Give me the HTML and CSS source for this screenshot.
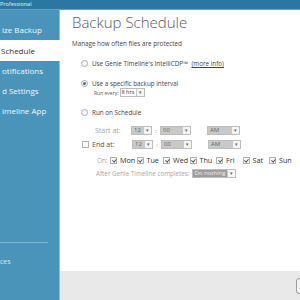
FILE: index.html
```html
<!DOCTYPE html>
<html>
<head>
<meta charset="utf-8">
<link rel="stylesheet" href="styles.css">
</head>
<body>
<div class="titlebar"><span class="apptitle">Professional</span></div>
<div class="main">
  <nav class="sidebar">
    <div class="item">ize Backup</div>
    <div class="item selected">Schedule</div>
    <div class="item">otifications</div>
    <div class="item">d Settings</div>
    <div class="item">imeline App</div>
    <div class="spacer"></div>
    <div class="sidebottom">
      <div class="sep"></div>
      <div class="item small">ces</div>
    </div>
  </nav>
  <section class="content">
    <div class="panel">
      <h1 class="heading">Backup Schedule</h1>
      <div class="desc">Manage how often files are protected</div>
      <div class="row r1"><span class="radio"></span><span>Use Genie Timeline's IntelliCDP™ <a class="link">(more info)</a></span></div>
      <div class="row r2"><span class="radio on"></span><span>Use a specific backup interval</span></div>
      <div class="row runevery"><span class="lbl dark">Run every:</span><span class="select white w-every"><span class="val">8 hrs</span><span class="arrow">▾</span></span></div>
      <div class="row r3"><span class="radio"></span><span>Run on Schedule</span></div>
      <div class="row time start"><span class="lbl gray w-lbl">Start at:</span>
        <span class="select grey w-h"><span class="val">12</span><span class="arrow">▾</span></span><span class="colon">:</span>
        <span class="select grey w-m"><span class="val">00</span><span class="arrow">▾</span></span>
        <span class="select grey w-ap"><span class="val">AM</span><span class="arrow">▾</span></span></div>
      <div class="row time end"><span class="check"></span><span class="lbl mid w-lbl2">End at:</span>
        <span class="select grey w-h"><span class="val">12</span><span class="arrow">▾</span></span><span class="colon">:</span>
        <span class="select grey w-m"><span class="val">00</span><span class="arrow">▾</span></span>
        <span class="select grey w-ap"><span class="val">AM</span><span class="arrow">▾</span></span></div>
      <div class="row days"><span class="lbl gray w-on">On:</span>
        <div class="daylist">
          <span class="day"><span class="check on"></span>Mon</span>
          <span class="day"><span class="check on"></span>Tue</span>
          <span class="day"><span class="check on"></span>Wed</span>
          <span class="day"><span class="check on"></span>Thu</span>
          <span class="day"><span class="check on"></span>Fri</span>
          <span class="day"><span class="check on"></span>Sat</span>
          <span class="day"><span class="check on"></span>Sun</span>
        </div>
      </div>
      <div class="row after"><span class="lbl gray">After Genie Timeline completes:</span><span class="select dim w-after"><span class="val">Do nothing</span><span class="arrow">▾</span></span></div>
    </div>
    <div class="footer"><span class="btn"></span></div>
  </section>
</div>
</body>
</html>
```
FILE: styles.css
```css
html, body {
  margin: 0;
  padding: 0;
  width: 300px;
  height: 300px;
  overflow: hidden;
  font-family: "Open Sans", "Noto Sans", sans-serif;
  background: #ffffff;
}

.titlebar {
  height: 9px;
  background: #2a77a2;
  border-bottom: 1px solid #5ea4c6;
  overflow: hidden;
  display: flex;
  align-items: center;
}
.apptitle {
  color: #e6f1f7;
  font-size: 5.5px;
  margin-left: 0;
  line-height: 9px;
}

.main {
  display: flex;
  height: 290px;
}

.sidebar {
  width: 60px;
  flex: none;
  background: #4a94b9;
  box-shadow: inset -1px 0 0 #8fc2da;
  display: flex;
  flex-direction: column;
  padding-top: 10px;
  box-sizing: border-box;
  overflow: hidden;
}
.item {
  height: 20px;
  line-height: 20px;
  color: #f2f8fb;
  font-size: 8px;
  padding-left: 2px;
  white-space: nowrap;
}
.item.selected {
  background: #ffffff;
  color: #333333;
  height: 21px;
  line-height: 22px;
  padding-left: 1px;
}
.spacer { flex: 1; }
.sidebottom {
  height: 58px;
  display: flex;
  flex-direction: column;
}
.sep {
  height: 1px;
  width: 48px;
  background: #7fb6d1;
  margin-bottom: 14px;
}
.item.small {
  height: 10px;
  line-height: 10px;
  font-size: 7px;
  color: #d6e9f3;
  padding-left: 0;
}

.content {
  flex: 1;
  display: flex;
  flex-direction: column;
}
.panel {
  flex: 1;
  padding: 3px 0 0 12px;
  display: flex;
  flex-direction: column;
  font-size: 6.3px;
  color: #444;
}
.heading {
  margin: 0;
  font-size: 15px;
  font-weight: 300;
  line-height: 18px;
  color: #5a5a5a;
  height: 18px;
}
.desc {
  margin-top: 8px;
  height: 9px;
  line-height: 9px;
  color: #444;
}
.row {
  display: flex;
  align-items: center;
  height: 10px;
  white-space: nowrap;
}
.r1 { margin-top: 10px; padding-left: 9px; }
.r2 { margin-top: 10px; padding-left: 9px; }
.runevery { margin-top: 0; height: 9px; padding-left: 22px; }
.r3 { margin-top: 10px; padding-left: 9px; }
.start { margin-top: 8px; height: 11px; padding-left: 23px; }
.end { margin-top: 3px; height: 11px; padding-left: 10px; }
.days { margin-top: 5px; padding-left: 25px; }
.after { margin-top: 3px; padding-left: 24px; }

.radio {
  width: 5px;
  height: 5px;
  border: 1px solid #a9a9a9;
  border-radius: 50%;
  margin-right: 4px;
  display: flex;
  align-items: center;
  justify-content: center;
  background: #fafafa;
}
.radio.on::after {
  content: "";
  width: 3px;
  height: 3px;
  border-radius: 50%;
  background: #2f6fc2;
}
.link {
  color: #444;
  text-decoration: underline;
  margin-left: 2px;
}
.lbl.dark { color: #555; margin-right: 1px; font-size: 5px; flex: none; }
.lbl.gray { color: #a5a5a5; }
.lbl.mid { color: #555; font-size: 7px; }
.w-lbl { width: 36px; font-size: 7px; }
.w-lbl2 { width: 40px; }
.w-on { width: 13px; }

.select {
  display: flex;
  align-items: stretch;
  height: 9px;
  box-sizing: border-box;
  border: 1px solid #bdbdbd;
  font-size: 6px;
  flex: none;
}
.select .val {
  flex: 1;
  padding-left: 2px;
  line-height: 7px;
  overflow: hidden;
}
.select .arrow {
  width: 7px;
  background: #f4f4f4;
  border-left: 1px solid #c9c9c9;
  color: #666;
  font-size: 5px;
  line-height: 7px;
  text-align: center;
}
.select.white { background: #fff; color: #333; }
.select.grey { background: #c9c9c9; color: #666; }
.select.dim { background: #9c9c9c; color: #f0f0f0; margin-left: 2px; }
.w-every { width: 25px; font-size: 5.5px; }
.w-every .val { padding-left: 1px; }
.w-h { width: 21px; }
.w-m { width: 31px; }
.w-ap { width: 33px; margin-left: 16px; }
.w-after { width: 44px; }
.colon { width: 8px; text-align: center; color: #888; font-size: 6px; }

.check {
  width: 5px;
  height: 5px;
  border: 1px solid #b0b0b0;
  background: #fafafa;
  margin-right: 3px;
  flex: none;
  position: relative;
}
.check.on::after {
  content: "";
  position: absolute;
  left: 1.5px;
  top: 0;
  width: 1.5px;
  height: 3px;
  border: solid #555;
  border-width: 0 1px 1px 0;
  transform: rotate(40deg);
}
.daylist {
  display: grid;
  grid-template-columns: repeat(7, 26.5px);
}
.day {
  display: flex;
  align-items: center;
  font-size: 7.2px;
  color: #333;
}

.footer {
  height: 29px;
  background: #e9e9e9;
  display: flex;
  justify-content: flex-end;
  align-items: center;
  overflow: hidden;
}
.btn {
  width: 20px;
  height: 14px;
  border: 1px solid #9a9a9a;
  border-radius: 3px;
  margin-right: -18px;
  background: #f2f2f2;
}
```
